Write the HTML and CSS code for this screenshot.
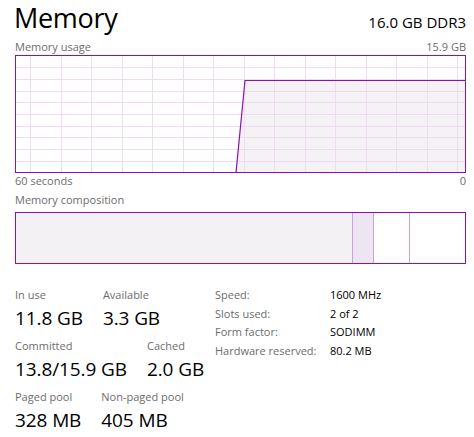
FILE: index.html
```html
<!DOCTYPE html>
<html>
<head>
<meta charset="utf-8">
<link rel="stylesheet" href="styles.css">
</head>
<body>
<div class="page">
  <div class="header">
    <h1 class="title">Memory</h1>
    <div class="spec">16.0 GB DDR3</div>
  </div>
  <div class="caption-row top-cap">
    <span>Memory usage</span>
    <span>15.9 GB</span>
  </div>
  <svg class="chart" width="451" height="118" viewBox="0 0 451 118">
    <polygon points="221,117 230,25 450,25 450,117" fill="#f4f2f4"/>
    <g stroke="#efdcf3" stroke-width="1">
      <line x1="15.5" y1="1" x2="15.5" y2="117"/>
      <line x1="46.5" y1="1" x2="46.5" y2="117"/>
      <line x1="76.5" y1="1" x2="76.5" y2="117"/>
      <line x1="107.5" y1="1" x2="107.5" y2="117"/>
      <line x1="137.5" y1="1" x2="137.5" y2="117"/>
      <line x1="168.5" y1="1" x2="168.5" y2="117"/>
      <line x1="198.5" y1="1" x2="198.5" y2="117"/>
      <line x1="229.5" y1="1" x2="229.5" y2="117"/>
      <line x1="259.5" y1="1" x2="259.5" y2="117"/>
      <line x1="290.5" y1="1" x2="290.5" y2="117"/>
      <line x1="320.5" y1="1" x2="320.5" y2="117"/>
      <line x1="351.5" y1="1" x2="351.5" y2="117"/>
      <line x1="381.5" y1="1" x2="381.5" y2="117"/>
      <line x1="412.5" y1="1" x2="412.5" y2="117"/>
      <line x1="442.5" y1="1" x2="442.5" y2="117"/>
      <line x1="1" y1="12.5" x2="450" y2="12.5"/>
      <line x1="1" y1="24.5" x2="450" y2="24.5"/>
      <line x1="1" y1="36.5" x2="450" y2="36.5"/>
      <line x1="1" y1="47.5" x2="450" y2="47.5"/>
      <line x1="1" y1="59.5" x2="450" y2="59.5"/>
      <line x1="1" y1="71.5" x2="450" y2="71.5"/>
      <line x1="1" y1="82.5" x2="450" y2="82.5"/>
      <line x1="1" y1="94.5" x2="450" y2="94.5"/>
      <line x1="1" y1="106.5" x2="450" y2="106.5"/>
    </g>
    <polyline points="221,117.5 230,25.5 450,25.5" fill="none" stroke="#8b12ae" stroke-width="1.2"/>
    <rect x="0.5" y="0.5" width="450" height="117" fill="none" stroke="#8b12ae" stroke-width="1"/>
  </svg>
  <div class="caption-row">
    <span>60 seconds</span>
    <span>0</span>
  </div>
  <div class="caption-row comp-cap">
    <span>Memory composition</span>
  </div>
  <div class="composition">
    <div class="seg inuse"></div>
    <div class="seg modified"></div>
    <div class="seg standby"></div>
    <div class="seg free"></div>
  </div>
  <div class="stats">
    <div class="stat-col">
      <div class="stat-row">
        <div class="stat"><div class="label">In use</div><div class="value">11.8 GB</div></div>
        <div class="stat"><div class="label">Available</div><div class="value">3.3 GB</div></div>
      </div>
      <div class="stat-row">
        <div class="stat"><div class="label">Committed</div><div class="value">13.8/15.9 GB</div></div>
        <div class="stat"><div class="label">Cached</div><div class="value">2.0 GB</div></div>
      </div>
      <div class="stat-row">
        <div class="stat"><div class="label">Paged pool</div><div class="value">328 MB</div></div>
        <div class="stat"><div class="label">Non-paged pool</div><div class="value">405 MB</div></div>
      </div>
    </div>
    <dl class="props">
      <dt>Speed:</dt><dd>1600 MHz</dd>
      <dt>Slots used:</dt><dd>2 of 2</dd>
      <dt>Form factor:</dt><dd>SODIMM</dd>
      <dt>Hardware reserved:</dt><dd>80.2 MB</dd>
    </dl>
  </div>
</div>
</body>
</html>
```

FILE: styles.css
```css
html, body {
  margin: 0;
  padding: 0;
  background: #ffffff;
}
body {
  font-family: "Open Sans", "Noto Sans", sans-serif;
  color: #000000;
}
.page {
  width: 451px;
  padding: 0 8px 0 15px;
}
.header {
  display: flex;
  justify-content: space-between;
  align-items: baseline;
  height: 39px;
}
.title {
  margin: 0 0 0 -1px;
  font-weight: 400;
  font-size: 27px;
  line-height: 36px;
  letter-spacing: -0.3px;
}
.spec {
  font-size: 15px;
  line-height: 20px;
}
.caption-row {
  display: flex;
  justify-content: space-between;
  font-size: 11px;
  line-height: 16px;
  color: #6d6d6d;
  height: 16px;
}
.chart {
  display: block;
}
.comp-cap {
  margin-top: 3px;
}
.composition {
  margin-top: 4px;
  height: 50px;
  border: 1px solid #8b12ae;
  display: flex;
}
.seg {
  height: 100%;
}
.inuse {
  width: 336px;
  background: #f3f1f4;
  border-right: 1px solid #c9a3d8;
}
.modified {
  width: 20px;
  background: #eee4f2;
  border-right: 1px solid #c9a3d8;
}
.standby {
  width: 35px;
  background: #ffffff;
  border-right: 1px solid #c9a3d8;
}
.free {
  flex: 1;
  background: #ffffff;
}
.stats {
  display: flex;
  align-items: flex-start;
  margin-top: 23px;
}
.stat-col {
  width: 200px;
  display: flex;
  flex-direction: column;
  gap: 4px;
}
.stat-row {
  display: flex;
  gap: 20px;
}
.label {
  font-size: 11px;
  line-height: 16px;
  color: #6d6d6d;
}
.value {
  font-size: 19px;
  line-height: 31px;
  letter-spacing: -0.1px;
}
.props {
  margin: 0;
  display: grid;
  grid-template-columns: 115px auto;
  row-gap: 2.5px;
  font-size: 11px;
  line-height: 16px;
}
.props dt {
  color: #6d6d6d;
}
.props dd {
  margin: 0;
  color: #000000;
}
```
